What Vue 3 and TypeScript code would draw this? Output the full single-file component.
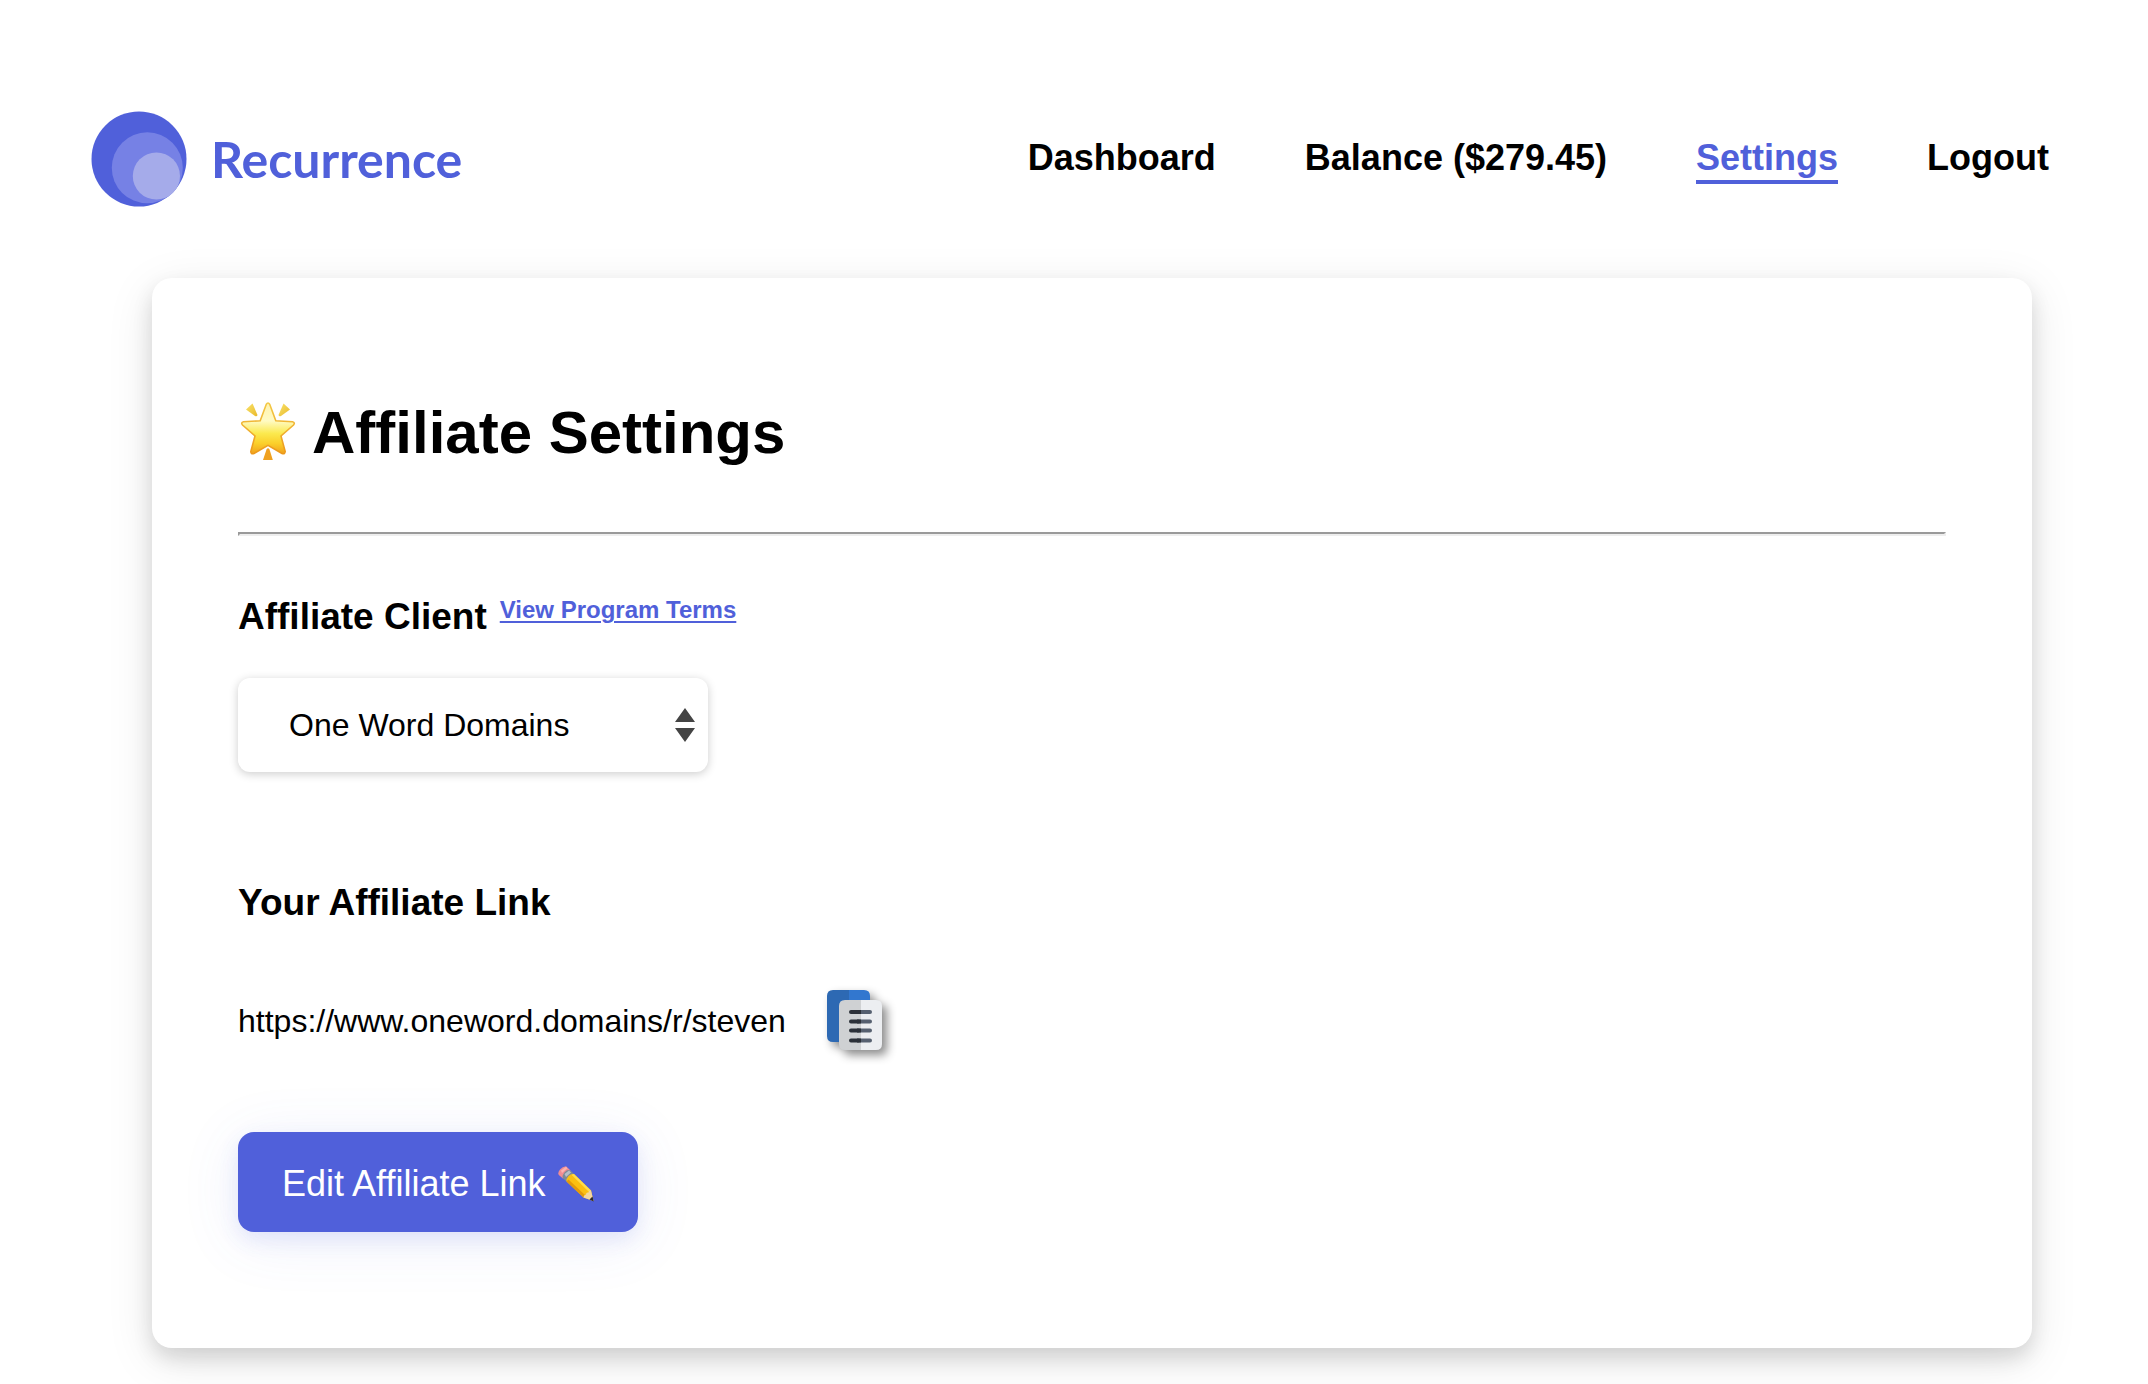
<script setup lang="ts">
import { ref } from 'vue'

interface NavItem {
  label: string
  active?: boolean
}

const navItems: NavItem[] = [
  { label: 'Dashboard' },
  { label: 'Balance ($279.45)' },
  { label: 'Settings', active: true },
  { label: 'Logout' },
]

const clients: string[] = ['One Word Domains']
const client = ref<string>(clients[0])
const affiliateLink = ref<string>('https://www.oneword.domains/r/steven')

function copyLink(): void {
  navigator.clipboard?.writeText(affiliateLink.value)
}
</script>

<template>
  <div class="page">
    <header class="header">
      <a class="brand" href="#">
        <svg class="brand-mark" viewBox="0 0 96 96" aria-hidden="true">
          <circle cx="48" cy="48" r="47.5" fill="#5060da" />
          <circle cx="56.3" cy="56.8" r="35.5" fill="#7681e5" />
          <circle cx="65.4" cy="65" r="23.6" fill="#a5abea" />
        </svg>
        <span class="brand-name">Recurrence</span>
      </a>
      <nav class="nav">
        <a
          v-for="item in navItems"
          :key="item.label"
          href="#"
          class="nav-link"
          :class="{ active: item.active }"
        >{{ item.label }}</a>
      </nav>
    </header>

    <main class="card">
      <h1 class="title">
        <svg class="star" viewBox="0 0 60 60" aria-hidden="true">
          <defs>
            <linearGradient id="star-fill" x1="0" y1="0" x2="0" y2="1">
              <stop offset="0" stop-color="#fff3b0" />
              <stop offset="0.35" stop-color="#fffbc4" />
              <stop offset="0.6" stop-color="#fbe94e" />
              <stop offset="0.8" stop-color="#fbcf2a" />
              <stop offset="1" stop-color="#f0a01c" />
            </linearGradient>
            <linearGradient id="star-edge" x1="0" y1="0" x2="0" y2="1">
              <stop offset="0" stop-color="#f3c945" />
              <stop offset="1" stop-color="#ec981b" />
            </linearGradient>
            <linearGradient id="ray-fill" x1="0" y1="0" x2="1" y2="1">
              <stop offset="0" stop-color="#f9e36a" />
              <stop offset="1" stop-color="#e9b92c" />
            </linearGradient>
          </defs>
          <path d="M8 8.500 14.500 2.500 19.500 14Q19 16 17 15Z" fill="url(#ray-fill)" />
          <path d="M52 8.500 45.500 2.500 40.500 14Q41 16 43 15Z" fill="url(#ray-fill)" />
          <path d="M28.500 48.500Q30 46 31.500 48.500L34.800 59H25Z" fill="#efa120" />
          <path
            d="M28.200 3.500Q30 0.500 31.800 3.500L37.800 19.800 54.500 20.800Q57.500 21.600 55.500 24L43 35 47.200 50.500Q47 53.500 44 52.500L30 44.400 16 52.500Q12.800 53.400 12.800 50.500L17 35 4.500 24Q2.500 21.600 5.500 20.800L22.200 19.800Z"
            fill="url(#star-fill)"
            stroke="url(#star-edge)"
            stroke-width="1.600"
          />
        </svg>
        Affiliate Settings
      </h1>

      <hr class="rule" />

      <div class="client-head">
        <h3 class="heading"><label for="client">Affiliate Client</label></h3>
        <a class="terms" href="#">View Program Terms</a>
      </div>

      <div class="select-wrap">
        <select id="client" v-model="client" class="select">
          <option v-for="name in clients" :key="name" :value="name">{{ name }}</option>
        </select>
        <svg class="arrows" viewBox="0 0 20 34" aria-hidden="true">
          <path d="M10 0 20 14H0Z M10 34 20 20H0Z" fill="#444" />
        </svg>
      </div>

      <h3 class="heading link-heading">Your Affiliate Link</h3>

      <div class="link-row">
        <span class="url">{{ affiliateLink }}</span>
        <button class="copy" type="button" aria-label="Copy affiliate link" @click="copyLink">
          <svg class="copy-icon" viewBox="0 0 56 62" aria-hidden="true">
            <path d="M6 0H22V52H6Q0 52 0 46V6Q0 0 6 0Z" fill="#2d69b3" />
            <path d="M22 0H37Q43 0 43 6V52H22Z" fill="#3277cf" />
            <path d="M18 10H34V60H18Q12 60 12 54V16Q12 10 18 10Z" fill="#cfd1d3" />
            <path d="M34 10H49Q55 10 55 16V54Q55 60 49 60H34Z" fill="#eceef1" />
            <path d="M34 22H43M34 31.500H43M34 40.500H43M34 50.500H43" stroke="#566070" stroke-width="4" stroke-linecap="round" />
            <path d="M32 22H24M32 31.500H24M32 40.500H24M32 50.500H24" stroke="#2b3038" stroke-width="4" stroke-linecap="round" />
            <path d="M30 20H34V24H30ZM30 29.500H34V33.500H30ZM30 38.500H34V42.500H30ZM30 48.500H34V52.500H30Z" fill="#2b3038" />
          </svg>
        </button>
      </div>

      <button class="edit" type="button">
        Edit Affiliate Link
        <svg class="pencil" viewBox="0 0 36 36" aria-hidden="true">
          <path d="M0.800 9Q-0.500 6.500 2 3.500T8 0.300L12.500 4.500 5 12.500Z" fill="#f08d92" />
          <path d="M3 4.500 8 0.800 9.500 2.300 4 7Z" fill="#fbb3b0" />
          <path d="M5 12.500Q3.500 10 6.500 6.500T12.500 4.500L16 8 8.500 15.500Z" fill="#7e8a96" />
          <path d="M6.500 8 11 4.500 13 6.500 8 11Z" fill="#b4bfc8" />
          <path d="M8.500 15.500Q8 12.500 10.500 10T16 8L33 24.500 35.500 35 25.500 31.500Z" fill="#fbbf12" />
          <path d="M8.500 15.500 10.500 13.500 28 30 25.500 31.500Z" fill="#e39a0c" />
          <path d="M13.500 8.800 16 8 33 24.500 31 26Z" fill="#ffdc4a" />
          <path d="M25.500 31.500Q25.500 29 28 28.500 28 26 30.500 26.500 31 24 33 24.500L35.500 35Z" fill="#f3d7a0" />
          <path d="M31.500 33.500 34.500 30.500 35.700 35.500Z" fill="#2e2a2a" />
        </svg>
      </button>
    </main>
  </div>
</template>

<style>
body {
  margin: 0;
  background: #fff;
}
</style>

<style scoped>
.page {
  box-sizing: border-box;
  padding: 111px 0 36px;
  font-family: "Liberation Sans", Arial, sans-serif;
  font-size: 32px;
  color: #000;
}

.header {
  display: flex;
  align-items: center;
  justify-content: space-between;
  height: 96px;
  padding: 0 99px 0 91px;
}

.brand {
  display: flex;
  align-items: center;
  gap: 24px;
  color: #5060da;
  text-decoration: none;
}

.brand-mark {
  width: 96px;
  height: 96px;
}

.brand-name {
  font-family: Lato, sans-serif;
  font-size: 50px;
  font-weight: 700;
  line-height: 56px;
}

.nav {
  display: flex;
  gap: 89px;
  padding-top: 4px;
}

.nav-link {
  padding-bottom: 2px;
  border-bottom: 4px solid transparent;
  color: #000;
  font-size: 36px;
  font-weight: 700;
  line-height: 40px;
  text-decoration: none;
  white-space: nowrap;
}

.nav-link.active {
  color: #5060da;
  border-color: #5060da;
}

.card {
  margin: 71px 116px 0 152px;
  padding: 120px 86px 116px;
  border-radius: 20px;
  background: #fff;
  box-shadow: 0 10px 20px rgba(0, 0, 0, 0.12), 0 12px 48px rgba(0, 0, 0, 0.1);
}

.title {
  display: flex;
  align-items: center;
  gap: 14px;
  margin: 0;
  font-size: 60px;
  font-weight: 700;
  line-height: 70px;
}

.star {
  width: 60px;
  height: 60px;
  margin-bottom: 4px;
}

.rule {
  height: 0;
  margin: 64px 0 60px;
  border: 2px solid;
  border-color: #9a9a9a #eee #eee #9a9a9a;
}

.client-head {
  display: flex;
  align-items: flex-start;
  gap: 13px;
}

.heading {
  margin: 0;
  font-size: 37px;
  font-weight: 700;
  line-height: 42px;
}

.terms {
  color: #5060da;
  font-size: 24px;
  font-weight: 700;
  line-height: 28px;
  text-decoration-thickness: 2px;
  text-underline-offset: 3px;
}

.select-wrap {
  position: relative;
  width: 470px;
  margin-top: 40px;
}

.select {
  display: block;
  box-sizing: border-box;
  width: 100%;
  height: 94px;
  padding: 0 51px;
  border: 0;
  border-radius: 12px;
  background: #fff;
  color: #000;
  font: inherit;
  appearance: none;
  box-shadow: 0 2px 10px rgba(0, 0, 0, 0.2);
}

.arrows {
  position: absolute;
  top: 30px;
  right: 13px;
  width: 20px;
  height: 34px;
  pointer-events: none;
}

.link-heading {
  margin-top: 110px;
}

.link-row {
  display: flex;
  align-items: center;
  gap: 41px;
  margin-top: 66px;
}

.url {
  line-height: 36px;
}

.copy {
  display: block;
  padding: 0;
  border: 0;
  background: none;
  cursor: pointer;
}

.copy-icon {
  display: block;
  width: 56px;
  height: 62px;
  overflow: visible;
  filter: drop-shadow(5px 5px 5px rgba(0, 0, 0, 0.45));
}

.edit {
  display: flex;
  align-items: center;
  gap: 12px;
  height: 100px;
  margin-top: 80px;
  padding: 3px 44px 0;
  border: 0;
  border-radius: 16px;
  background: #5060da;
  color: #fff;
  font-family: inherit;
  font-size: 36px;
  white-space: nowrap;
  box-shadow: 0 8px 20px rgba(80, 96, 218, 0.12), 0 8px 60px rgba(80, 96, 218, 0.1);
  cursor: pointer;
}

.pencil {
  width: 36px;
  height: 36px;
}
</style>
